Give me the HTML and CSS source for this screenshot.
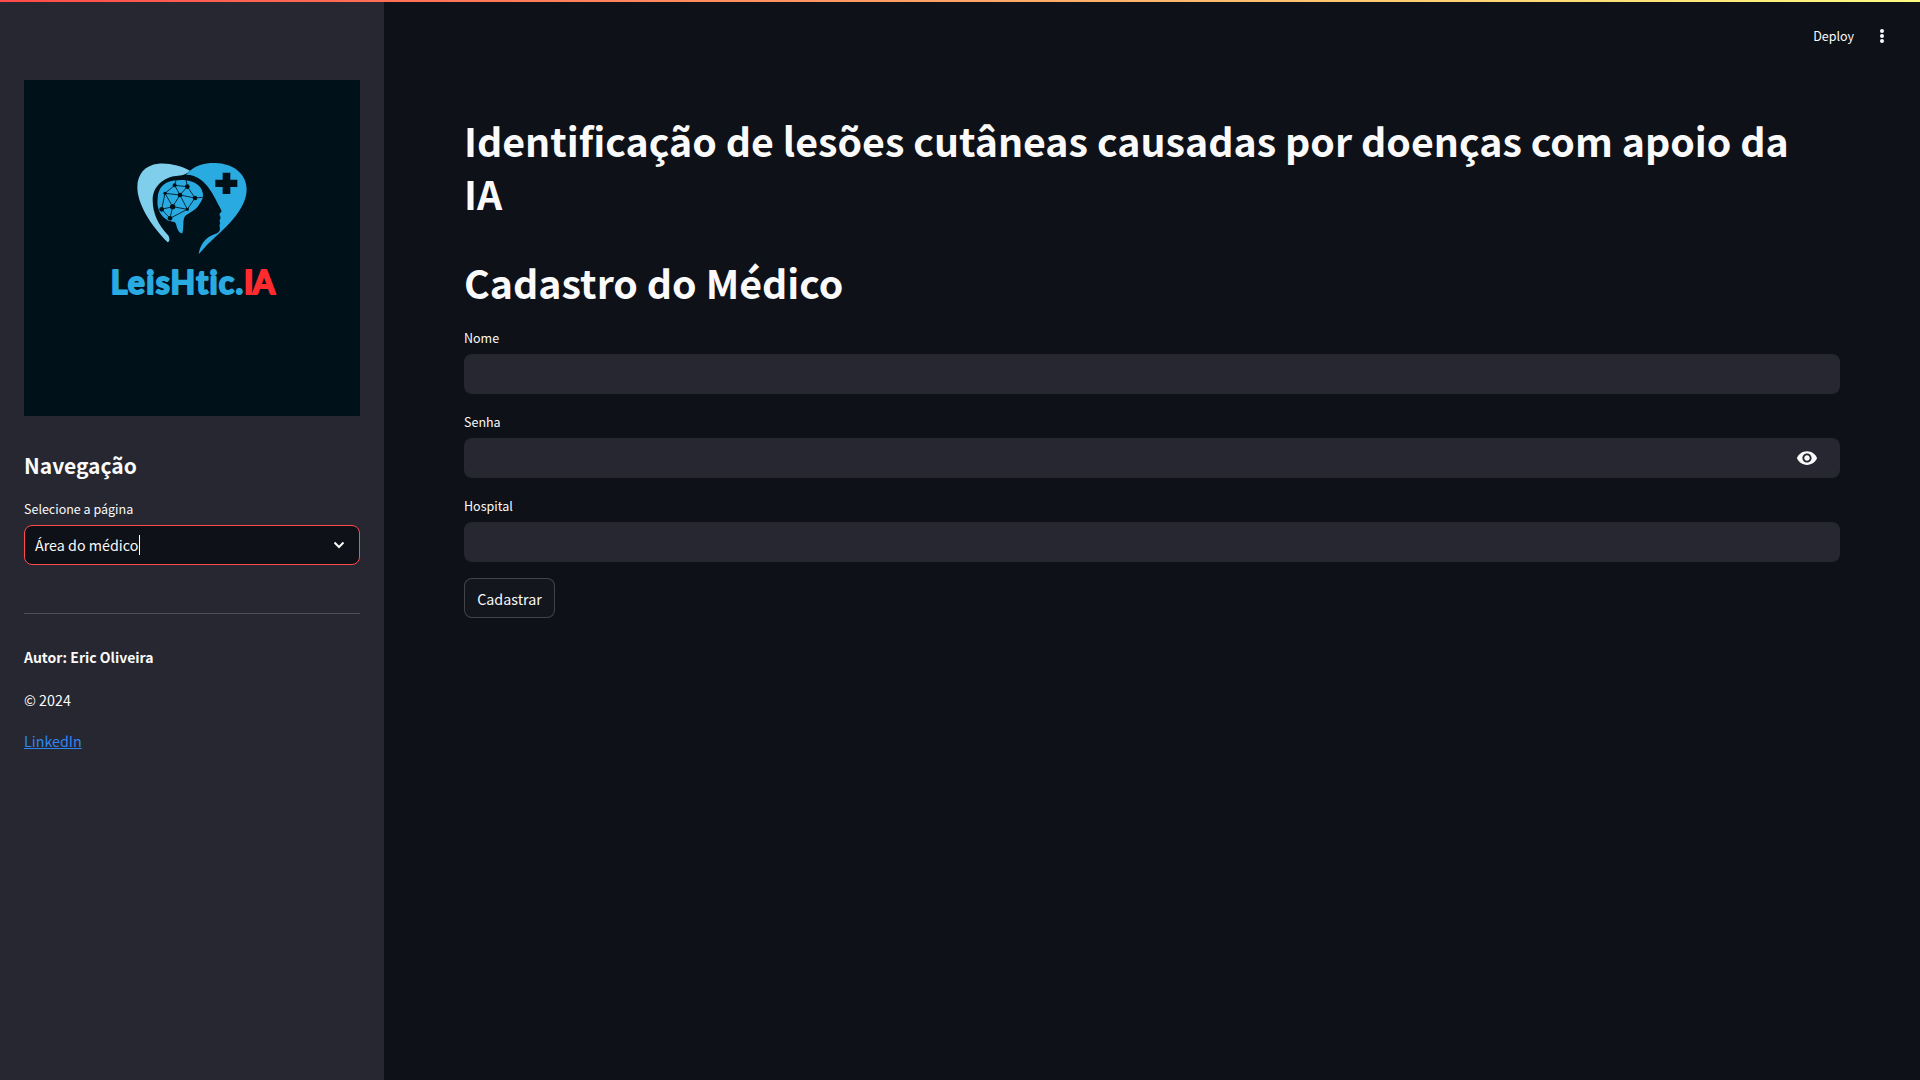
FILE: index.html
```html
<!DOCTYPE html>
<html lang="pt-BR">
<head>
    <meta charset="utf-8">
    <meta name="viewport" content="width=device-width, initial-scale=1">
    <title>LeisHtic.IA</title>
    <link rel="stylesheet" href="styles.css">
</head>
<body>
    <div class="top-line"></div>

    <aside class="sidebar">
        <svg class="logo" viewBox="0 0 336 336" role="img" aria-label="LeisHtic.IA">
            <rect width="336" height="336" fill="#00111a"/>
            <g transform="translate(76 70) scale(.3333)">
                <path fill="#7fcfec" d="M270 62C245 47 205 38 175 41C135 45 112 72 112 112C112 160 150 225 203 277C210 275 210 262 203 254C175 225 158 190 158 150C158 110 190 82 228 78C245 76 258 74 270 62Z"/>
                <path fill="#29abe2" d="M270 62C295 42 325 37 355 40C405 44 440 75 440 118C440 165 400 215 345 262C330 275 312 295 296 313C300 285 315 262 345 252C358 247 362 240 359 230C357 224 362 222 360 216C356 210 364 207 361 200C357 192 358 190 364 186C367 182 358 170 352 158C340 135 325 105 300 88C290 80 275 74 258 74Z"/>
                <path fill="#00111a" d="M346 89H368V68H391V89H412V111H391V132H368V111H346Z"/>
                <path fill="#29abe2" d="M173 145C174 115 190 97 218 92C245 88 275 88 295 106C310 120 314 140 303 155C295 165 296 170 282 180C268 190 255 195 252 205C248 220 252 235 247 250C238 250 232 240 228 222C225 212 215 216 205 212C190 205 178 190 174 172C172 162 172 155 173 145Z"/>
                <g fill="none" stroke="#00111a" stroke-width="2.5">
                    <path d="M185 178L195 130L224 106L262 110L285 144L240 135L218 170L185 178L210 205L218 170L262 178L285 144"/>
                    <path d="M224 106L240 135L262 110M195 130L240 135M195 130L218 170M240 135L262 178M262 178L210 205M224 106L228 90M262 110L258 88M285 144L308 142"/>
                </g>
                <g fill="#00111a">
                    <circle cx="185" cy="178" r="7"/>
                    <circle cx="195" cy="130" r="5"/>
                    <circle cx="224" cy="106" r="6"/>
                    <circle cx="262" cy="110" r="7"/>
                    <circle cx="285" cy="144" r="7"/>
                    <circle cx="240" cy="135" r="7"/>
                    <circle cx="218" cy="170" r="8"/>
                    <circle cx="262" cy="178" r="5"/>
                    <circle cx="210" cy="205" r="7"/>
                </g>
                <text class="logo-text" x="32" y="431">LeisHtic.<tspan class="logo-ia" x="432">IA</tspan></text>
            </g>
        </svg>

        <h2 class="sidebar-title">Navegação</h2>
        <label class="field-label">Selecione a página</label>
        <div class="select-box">
            <span class="select-value">Área do médico</span>
            <svg class="chevron" viewBox="0 0 12 8" aria-hidden="true">
                <path d="M1.5 1.5L6 6l4.5-4.5" fill="none" stroke="#fafafa" stroke-width="2"/>
            </svg>
        </div>

        <hr class="divider">

        <p class="side-text"><strong>Autor: Eric Oliveira</strong></p>
        <p class="side-text">© 2024</p>
        <p class="side-text"><a href="#">LinkedIn</a></p>
    </aside>

    <main class="main">
        <div class="toolbar">
            <span class="deploy">Deploy</span>
            <span class="kebab"><i></i><i></i><i></i></span>
        </div>

        <div class="content">
            <h1 class="page-title">Identificação de lesões cutâneas causadas por doenças com apoio da IA</h1>
            <h2 class="form-title">Cadastro do Médico</h2>

            <form class="form">
                <div class="form-group">
                    <label class="field-label" for="nome">Nome</label>
                    <div class="input-group"><input class="form-control" id="nome" type="text"></div>
                </div>
                <div class="form-group">
                    <label class="field-label" for="senha">Senha</label>
                    <div class="input-group">
                        <input class="form-control" id="senha" type="password">
                        <button type="button" class="password-toggle" aria-label="Mostrar senha">
                            <svg viewBox="0 0 24 24" width="22" height="22"><path fill="#fafafa" d="M12 4.5C7 4.5 2.73 7.61 1 12c1.73 4.39 6 7.5 11 7.5s9.27-3.11 11-7.5c-1.73-4.39-6-7.5-11-7.5zM12 17c-2.76 0-5-2.24-5-5s2.24-5 5-5 5 2.24 5 5-2.24 5-5 5zm0-8c-1.66 0-3 1.34-3 3s1.34 3 3 3 3-1.34 3-3-1.34-3-3-3z"/></svg>
                        </button>
                    </div>
                </div>
                <div class="form-group">
                    <label class="field-label" for="hospital">Hospital</label>
                    <div class="input-group"><input class="form-control" id="hospital" type="text"></div>
                </div>
                <button type="button" class="btn-submit">Cadastrar</button>
            </form>
        </div>
    </main>
</body>
</html>
```

FILE: styles.css
```css
* {
    margin: 0;
    padding: 0;
    box-sizing: border-box;
    font-family: "Noto Sans CJK SC", "Noto Sans", sans-serif;
}

body {
    height: 100vh;
    display: flex;
    overflow: hidden;
    background: #0e1117;
    color: #fafafa;
}

.top-line {
    position: fixed;
    top: 0;
    left: 0;
    right: 0;
    height: 2px;
    background: linear-gradient(90deg, #ff4b4b, #fffd80);
}

/* sidebar */
.sidebar {
    width: 384px;
    flex-shrink: 0;
    padding: 80px 24px 0;
    background: #262730;
}

.logo {
    display: block;
    width: 336px;
    height: 336px;
}

.logo-text {
    font-family: "Lato", sans-serif;
    font-weight: 700;
    font-size: 96px;
    font-variant-ligatures: none;
    letter-spacing: 4px;
    fill: #29abe2;
    stroke: #29abe2;
    stroke-width: 6;
    stroke-linejoin: round;
}

.logo-ia {
    font-family: "Lato", sans-serif;
    letter-spacing: -2px;
    fill: #ff2b2e;
    stroke: #ff2b2e;
}

.sidebar-title {
    margin-top: 30px;
    font-size: 21px;
    font-weight: 600;
    line-height: 38px;
}

.field-label {
    display: block;
    height: 22px;
    font-size: 12.5px;
    line-height: 22px;
}

.sidebar .field-label {
    margin-top: 14px;
}

.select-box {
    display: flex;
    align-items: center;
    justify-content: space-between;
    height: 40px;
    margin-top: 5px;
    padding: 0 14px 0 10px;
    background: #0e1117;
    border: 1px solid #ff4b4b;
    border-radius: 8px;
}

.select-value {
    padding-right: 1px;
    border-right: 1px solid #fafafa;
    font-size: 14.3px;
    line-height: 20px;
}

.chevron {
    width: 12px;
    height: 8px;
}

.divider {
    margin: 48px 0 30px;
    border: none;
    border-bottom: 1px solid rgba(250, 250, 250, 0.2);
}

.side-text {
    margin-bottom: 16px;
    font-size: 14.3px;
    line-height: 25.6px;
}

.side-text strong {
    font-size: 14px;
    font-weight: 600;
}

.side-text a {
    color: #2f86f0;
}

/* main */
.main {
    flex: 1;
    min-width: 0;
}

.toolbar {
    display: flex;
    align-items: center;
    justify-content: flex-end;
    height: 72px;
    padding-right: 36px;
}

.deploy {
    font-size: 12.5px;
    line-height: 20px;
    margin-right: 26px;
}

.kebab {
    display: flex;
    flex-direction: column;
    gap: 1px;
}

.kebab i {
    width: 4px;
    height: 4px;
    border-radius: 50%;
    background: #fafafa;
}

.content {
    padding: 42px 80px 0;
}

.page-title {
    padding-right: 30px;
    font-size: 39.3px;
    font-weight: 700;
    line-height: 52.8px;
}

.form-title {
    margin-top: 36px;
    font-size: 39.3px;
    font-weight: 700;
    line-height: 52.8px;
}

.form {
    margin-top: 19px;
}

.form-group {
    margin-bottom: 17px;
}

.form-group .field-label {
    margin-bottom: 5px;
}

.input-group {
    display: flex;
    align-items: center;
    height: 40px;
    background: #262730;
    border-radius: 8px;
}

.form-control {
    flex: 1;
    height: 100%;
    padding: 0 16px;
    background: none;
    border: none;
    outline: none;
    color: #fafafa;
    font-size: 14.3px;
}

.password-toggle {
    display: flex;
    margin-right: 22px;
    background: none;
    border: none;
    cursor: pointer;
}

.btn-submit {
    display: block;
    width: 91px;
    height: 40px;
    margin-top: -1px;
    background: #13161d;
    border: 1px solid rgba(250, 250, 250, 0.2);
    border-radius: 8px;
    color: #fafafa;
    font-size: 14.3px;
    cursor: pointer;
}
```
